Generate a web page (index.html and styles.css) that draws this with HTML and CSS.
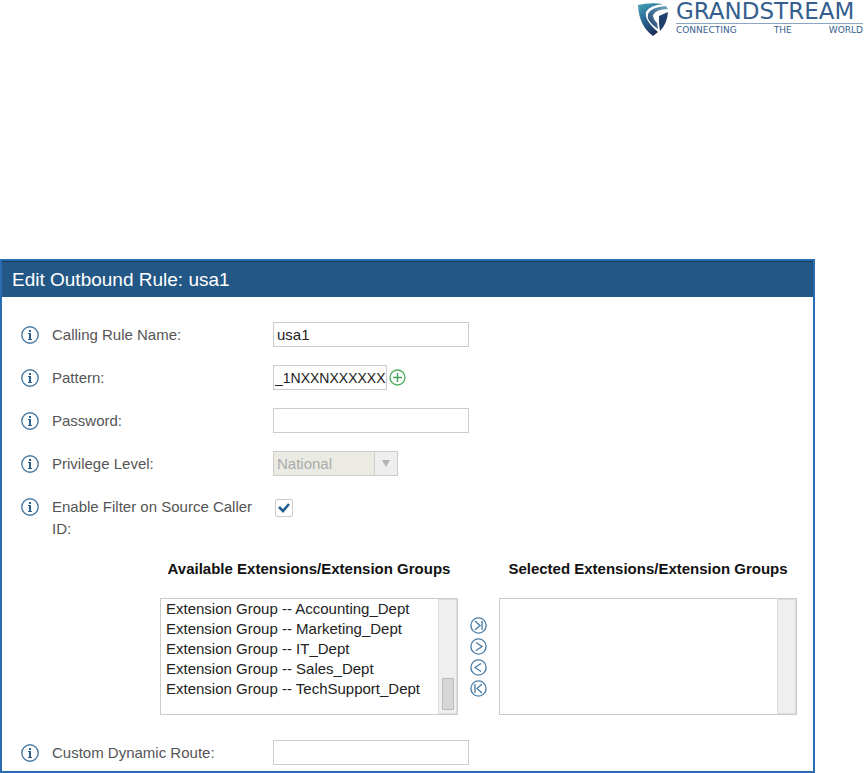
FILE: index.html
```html
<!DOCTYPE html>
<html lang="en">
<head>
    <meta charset="UTF-8">
    <meta name="viewport" content="width=device-width, initial-scale=1.0">
    <title>Edit Outbound Rule</title>
    <link rel="stylesheet" href="styles.css">
</head>
<body>

    <svg class="defs" aria-hidden="true">
        <symbol id="info" viewBox="0 0 18 18">
            <circle cx="9" cy="9" r="8.2" fill="none" stroke="#4a7ba3" stroke-width="1.4"/>
            <path d="M8 4h2v2H8zM7 7h3v6h1v1H7v-1h1V8H7z" fill="#2c618f"/>
        </symbol>
    </svg>

    <header class="page-header">
        <div class="logo">
            <svg class="logo-mark" viewBox="0 0 31 34" aria-hidden="true">
                <defs>
                    <linearGradient id="shade" x1="0" y1="0" x2="0.5" y2="1">
                        <stop offset="0" stop-color="#4aa6b8"/>
                        <stop offset="0.45" stop-color="#2b6f98"/>
                        <stop offset="1" stop-color="#1b3059"/>
                    </linearGradient>
                    <linearGradient id="inner" x1="1" y1="0" x2="0" y2="1">
                        <stop offset="0" stop-color="#6fa9c2"/>
                        <stop offset="1" stop-color="#1f3f6d"/>
                    </linearGradient>
                </defs>
                <path d="M0 3Q12 0 25 2Q12 3 8 10Q6 18 20 30L15 34Q1 24 0 3Z" fill="url(#shade)"/>
                <path d="M10 12Q13 5 28 4L30 7Q18 7 15 13Q15 17 19 21L20 27Q8 19 10 12Z" fill="url(#inner)"/>
                <path d="M21 14L30 10Q29 22 22 29Q21 24 21 20Z" fill="#1f3f6d"/>
            </svg>
            <div class="logo-text">
                <div class="logo-name">GRANDSTREAM</div>
                <div class="logo-tag"><span>CONNECTING</span><span>THE</span><span>WORLD</span></div>
            </div>
        </div>
    </header>

    <form class="panel">
        <h1>Edit Outbound Rule: usa1</h1>

        <div class="row">
            <svg class="info"><use href="#info"/></svg>
            <label for="ruleName">Calling Rule Name:</label>
            <input type="text" id="ruleName" value="usa1">
        </div>

        <div class="row">
            <svg class="info"><use href="#info"/></svg>
            <label for="pattern">Pattern:</label>
            <div class="field">
                <input type="text" id="pattern" class="short" value="_1NXXNXXXXXX">
                <button type="button" class="icon-btn" aria-label="Add pattern">
                    <svg viewBox="0 0 17 17"><circle cx="8.5" cy="8.5" r="7.5" fill="none" stroke="#4fae62" stroke-width="1.3"/><path d="M8.5 4v9M4 8.5h9" stroke="#3fa455" stroke-width="1.4"/></svg>
                </button>
            </div>
        </div>

        <div class="row">
            <svg class="info"><use href="#info"/></svg>
            <label for="password">Password:</label>
            <input type="text" id="password">
        </div>

        <div class="row">
            <svg class="info"><use href="#info"/></svg>
            <label for="privilege">Privilege Level:</label>
            <div class="dropdown">
                <select id="privilege" disabled>
                    <option>National</option>
                </select>
                <span class="arrow"><svg viewBox="0 0 8 7"><path d="M0 0h8L4 7z" fill="#b3b3b3"/></svg></span>
            </div>
        </div>

        <div class="row tall">
            <svg class="info"><use href="#info"/></svg>
            <label for="filter">Enable Filter on Source Caller ID:</label>
            <input type="checkbox" id="filter" checked>
        </div>

        <!-- Extension picker -->
        <div class="picker">
            <div class="list">
                <label for="available">Available Extensions/Extension Groups</label>
                <div class="listbox">
                    <select id="available" multiple size="5">
                        <option>Extension Group -- Accounting_Dept</option>
                        <option>Extension Group -- Marketing_Dept</option>
                        <option>Extension Group -- IT_Dept</option>
                        <option>Extension Group -- Sales_Dept</option>
                        <option>Extension Group -- TechSupport_Dept</option>
                    </select>
                    <div class="track"><div class="thumb"></div></div>
                </div>
            </div>
            <div class="moves">
                <button type="button" class="icon-btn" aria-label="Add all">
                    <svg viewBox="0 0 17 17"><circle cx="8.5" cy="8.5" r="7.6"/><path d="M5 4l5 4.5L5 13M12 4v9"/></svg>
                </button>
                <button type="button" class="icon-btn" aria-label="Add">
                    <svg viewBox="0 0 17 17"><circle cx="8.5" cy="8.5" r="7.6"/><path d="M6 4.5l6 4-6 4"/></svg>
                </button>
                <button type="button" class="icon-btn" aria-label="Remove">
                    <svg viewBox="0 0 17 17"><circle cx="8.5" cy="8.5" r="7.6"/><path d="M11 4.5l-6 4 6 4"/></svg>
                </button>
                <button type="button" class="icon-btn" aria-label="Remove all">
                    <svg viewBox="0 0 17 17"><circle cx="8.5" cy="8.5" r="7.6"/><path d="M12 4L7 8.5l5 4.5M5 4v9"/></svg>
                </button>
            </div>
            <div class="list">
                <label for="selected">Selected Extensions/Extension Groups</label>
                <div class="listbox">
                    <select id="selected" multiple size="5"></select>
                    <div class="track"></div>
                </div>
            </div>
        </div>

        <div class="row last">
            <svg class="info"><use href="#info"/></svg>
            <label for="route">Custom Dynamic Route:</label>
            <input type="text" id="route">
        </div>
    </form>

</body>
</html>
```
FILE: styles.css
```css
* {
    box-sizing: border-box;
}
body {
    margin: 0;
    font-family: "Liberation Sans", Arial, sans-serif;
    font-size: 15px;
    line-height: 22px;
    color: #555;
    background: white;
}
svg {
    display: block;
}
.defs {
    display: none;
}

/* Logo */
.page-header {
    display: flex;
    justify-content: flex-end;
    padding: 0 1px 0 0;
    margin-bottom: 222px;
}
.logo {
    display: flex;
    gap: 7px;
}
.logo-mark {
    width: 31px;
    height: 34px;
    margin-top: 2px;
}
.logo-text {
    width: 187px;
    font-family: "DejaVu Sans", sans-serif;
    color: #355f8f;
}
.logo-name {
    font-size: 23px;
    line-height: 23px;
    border-bottom: 1px solid #8ba5c2;
}
.logo-tag {
    display: flex;
    justify-content: space-between;
    font-size: 9px;
    line-height: 13px;
}

/* Panel */
.panel {
    margin-right: 49px;
    border: 2px solid #2a6cb0;
}
h1 {
    margin: 0 0 16px;
    padding: 6px 10px 5px;
    border-top: 1px solid #17395a;
    font-size: 19px;
    font-weight: normal;
    line-height: 24px;
    color: white;
    background: #235785;
}
.row {
    display: grid;
    grid-template-columns: 18px 208px 1fr;
    column-gap: 13px;
    align-items: center;
    justify-items: start;
    padding: 9px 19px;
}
.row.tall {
    align-items: start;
    padding: 11px 19px 9px;
}
.row.last {
    padding-bottom: 6px;
}
.tall .info {
    margin-top: 2px;
}
.info {
    width: 18px;
    height: 18px;
}
input[type="text"] {
    width: 196px;
    height: 25px;
    padding: 0 3px;
    border: 1px solid #ccc;
    font: inherit;
    color: #222;
    background: white;
}
input[type="text"].short {
    width: 114px;
    padding: 0 0 0 1px;
    font-size: 14px;
}
.field {
    display: flex;
    align-items: center;
    gap: 2px;
}
.icon-btn {
    width: 17px;
    height: 17px;
    padding: 0;
    border: none;
    background: none;
    cursor: pointer;
}
.dropdown {
    display: flex;
    width: 125px;
    height: 25px;
    border: 1px solid #ccc;
    background: #ebebe4;
}
.dropdown select {
    flex: 1;
    appearance: none;
    padding: 0 3px;
    border: none;
    font: inherit;
    color: #aaa;
    background: none;
    opacity: 1;
}
.arrow {
    display: flex;
    align-items: center;
    justify-content: center;
    width: 23px;
    border-left: 1px solid #ccc;
    background: #eee;
}
.arrow svg {
    width: 8px;
    height: 7px;
}
input[type="checkbox"] {
    appearance: none;
    width: 18px;
    height: 18px;
    margin: 3px 2px;
    border: 1px solid #ccc;
    border-radius: 2px;
    background: white;
}
input[type="checkbox"]:checked {
    background: url("data:image/svg+xml,%3Csvg xmlns='http://www.w3.org/2000/svg' viewBox='0 0 16 16'%3E%3Cpath d='M3 7l4 4 6-7' fill='none' stroke='%23235f91' stroke-width='2.6'/%3E%3C/svg%3E") center / 16px no-repeat;
}

/* Extension lists */
.picker {
    display: flex;
    gap: 12px;
    padding: 9px 16px 16px 158px;
}
.list {
    flex: 1;
    min-width: 0;
}
.list label {
    display: block;
    margin-bottom: 18px;
    font-weight: bold;
    text-align: center;
    color: #111;
}
.listbox {
    display: flex;
    height: 117px;
    border: 1px solid #ccccc6;
}
.listbox select {
    flex: 1;
    min-width: 0;
    padding: 1px 0;
    border: none;
    outline: none;
    overflow: hidden;
    font: inherit;
    color: #222;
    background: white;
}
.listbox option {
    height: 20px;
    min-height: 20px;
    padding: 0 5px;
    line-height: 20px;
}
.track {
    display: flex;
    align-items: flex-end;
    justify-content: center;
    width: 19px;
    padding-bottom: 3px;
    border: 1px solid #ddd;
    background: #efefef;
}
.thumb {
    width: 12px;
    height: 32px;
    border: 1px solid #bbb;
    border-radius: 1px;
    background: #d6d6d6;
}
.moves {
    display: flex;
    flex-direction: column;
    gap: 4px;
    padding-top: 59px;
}
.moves svg {
    fill: none;
    stroke: #4f80a8;
    stroke-width: 1.4;
}
```
